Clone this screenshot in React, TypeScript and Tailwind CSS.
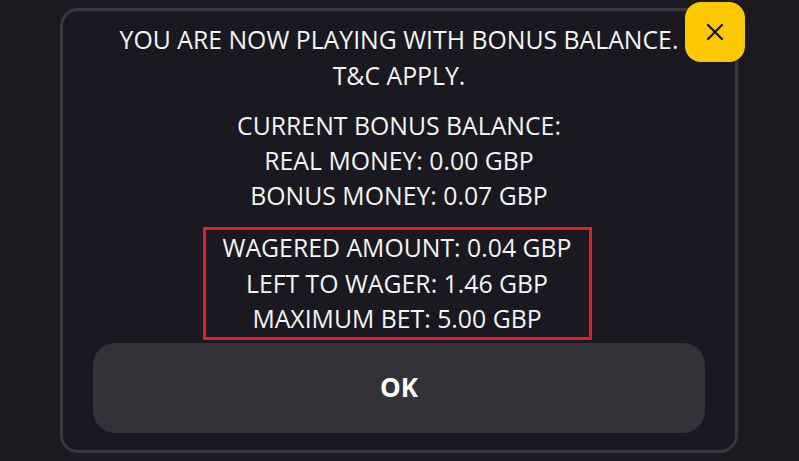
import React from "react";

export default function App() {
  return (
    <div
      className="relative w-[799px] h-[461px] overflow-hidden bg-[#1b1a20] pt-[8px] pl-[60px]"
      style={{ fontFamily: '"Open Sans", "Liberation Sans", sans-serif' }}
    >
      <div className="w-[678px] h-[445px] rounded-[18px] border-[3px] border-[#38373d] bg-[#1a1922] flex flex-col items-center text-[24.8px] text-[#f4f4f4] pt-[10px]">
        <div className="text-center leading-[36px] whitespace-nowrap">
          <div>YOU ARE NOW PLAYING WITH BONUS BALANCE.</div>
          <div>T&amp;C APPLY.</div>
        </div>
        <div className="text-center leading-[35px] mt-[15px] whitespace-nowrap">
          <div>CURRENT BONUS BALANCE:</div>
          <div>REAL MONEY: 0.00 GBP</div>
          <div>BONUS MONEY: 0.07 GBP</div>
        </div>
        <div className="mt-[14px] mr-[4px] border-[3px] border-[#e31e28] px-[17px] text-center leading-[35.5px] whitespace-nowrap">
          <div>WAGERED AMOUNT: 0.04 GBP</div>
          <div>LEFT TO WAGER: 1.46 GBP</div>
          <div>MAXIMUM BET: 5.00 GBP</div>
        </div>
        <button className="mt-[3px] w-[612px] h-[90px] rounded-[22px] bg-[#333238] text-white font-bold text-[26px] flex items-center justify-center">
          OK
        </button>
      </div>
      <button className="absolute left-[685px] top-[2px] w-[60px] h-[60px] rounded-[16px] bg-[#fcc900] flex items-center justify-center">
        <svg width="18" height="18" viewBox="0 0 18 18" fill="none" stroke="#111" strokeWidth="2.2" strokeLinecap="round">
          <path d="M2 2 L16 16 M16 2 L2 16" />
        </svg>
      </button>
    </div>
  );
}
